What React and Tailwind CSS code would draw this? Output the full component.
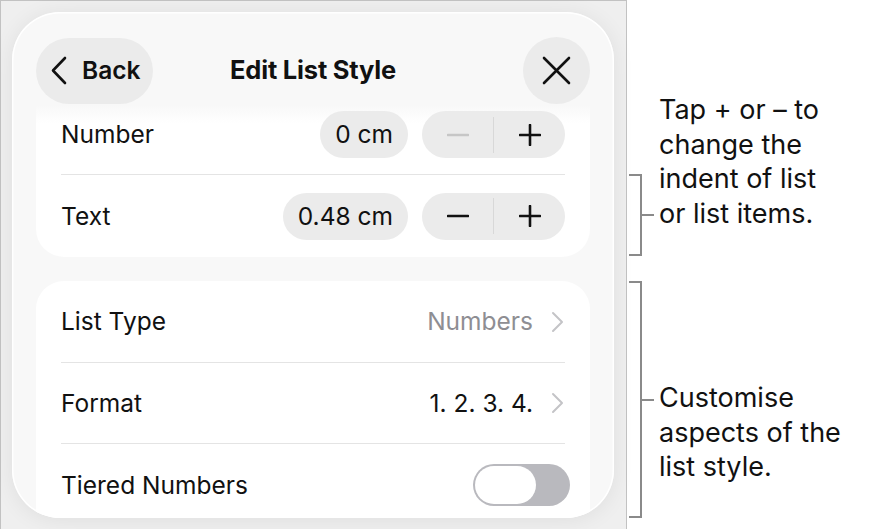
import React from "react";

function Chevron({ className }) {
  return (
    <svg width="13" height="22" viewBox="0 0 13 22" fill="none" className={className}>
      <path d="M2 2l9 9-9 9" stroke="currentColor" strokeWidth="2" strokeLinecap="round" strokeLinejoin="round" />
    </svg>
  );
}

function Stepper({ minusDisabled }) {
  return (
    <div className="flex items-center h-[47px] w-[143px] rounded-full bg-[#ebebeb]">
      <div className="flex-1 flex items-center justify-center">
        <svg width="22" height="4" viewBox="0 0 22 4">
          <path d="M1 2h20" stroke={minusDisabled ? "#c6c6c6" : "#111"} strokeWidth="2.6" strokeLinecap="round" />
        </svg>
      </div>
      <div className="w-px h-[36px] bg-[#d8d8d8]" />
      <div className="flex-1 flex items-center justify-center">
        <svg width="22" height="22" viewBox="0 0 22 22">
          <path d="M1 11h20M11 1v20" stroke="#111" strokeWidth="2.6" strokeLinecap="round" />
        </svg>
      </div>
    </div>
  );
}

function IndentRow({ label, value, minusDisabled, className }) {
  return (
    <div className={"flex items-center justify-between " + className}>
      <span>{label}</span>
      <div className="flex items-center gap-[14px]">
        <div className="h-[47px] px-[15px] rounded-full bg-[#ebebeb] flex items-center">{value}</div>
        <Stepper minusDisabled={minusDisabled} />
      </div>
    </div>
  );
}

function Bracket({ height }) {
  return (
    <div className="flex items-center">
      <div className="w-[13px] border-y-2 border-r-2 border-[#8a8a8a]" style={{ height }} />
      <div className="w-[12px] h-[2px] bg-[#8a8a8a]" />
    </div>
  );
}

export default function App() {
  return (
    <div
      className="flex w-[870px] h-[529px] bg-white text-[#111] overflow-hidden"
      style={{ fontFamily: "Inter, 'Noto Sans', sans-serif" }}
    >
      {/* device screenshot */}
      <div className="w-[627px] h-[529px] shrink-0 border-l border-t border-r border-[#c2c2c2] bg-[#efefef] pt-[11px] pl-[11px]">
        <div className="w-[602px] h-[506px] rounded-[48px] overflow-hidden bg-[#f8f8f8] px-[24px] shadow-[inset_0_0_0_1.5px_#ffffff,0_2px_22px_rgba(0,0,0,0.07)]">
          {/* header */}
          <div className="grid grid-cols-[1fr_auto_1fr] items-center h-[66px] mt-[25px]">
            <div className="flex">
              <div className="h-[66px] w-[117px] rounded-full bg-[#ebebeb] flex items-center pl-[14px] gap-[14px]">
                <svg width="18" height="29" viewBox="0 0 18 29" fill="none">
                  <path d="M15 2L3 14.5 15 27" stroke="#111" strokeWidth="2.6" strokeLinecap="round" strokeLinejoin="round" />
                </svg>
                <span className="text-[24.5px] font-semibold">Back</span>
              </div>
            </div>
            <div className="text-[25.5px] font-bold tracking-[-0.2px]">Edit List Style</div>
            <div className="flex justify-end">
              <div className="h-[67px] w-[67px] rounded-full bg-[#ebebeb] flex items-center justify-center">
                <svg width="29" height="29" viewBox="0 0 29 29" fill="none">
                  <path d="M2 2l25 25M27 2L2 27" stroke="#111" strokeWidth="2.6" strokeLinecap="round" />
                </svg>
              </div>
            </div>
          </div>

          {/* indents card */}
          <div className="mt-[2px] rounded-b-[28px] bg-[linear-gradient(to_bottom,#f8f8f8,#ffffff_18px)] px-[25px] text-[24.5px]">
            <IndentRow label="Number" value="0 cm" minusDisabled className="pt-[6px] pb-[16px]" />
            <div className="h-px bg-[#e4e4e4]" />
            <IndentRow label="Text" value="0.48 cm" className="h-[82px]" />
          </div>

          {/* list options card */}
          <div className="mt-[24px] rounded-t-[28px] bg-white px-[25px] text-[24.5px]">
            <div className="h-[81px] flex items-center justify-between">
              <span>List Type</span>
              <div className="flex items-center gap-[18px] text-[#8e8e93]">
                <span>Numbers</span>
                <Chevron className="text-[#c4c4c7] mr-[1px]" />
              </div>
            </div>
            <div className="h-px bg-[#e4e4e4]" />
            <div className="h-[80px] flex items-center justify-between">
              <span>Format</span>
              <div className="flex items-center gap-[18px]">
                <span>1. 2. 3. 4.</span>
                <Chevron className="text-[#c4c4c7] mr-[1px]" />
              </div>
            </div>
            <div className="h-px bg-[#e4e4e4]" />
            <div className="h-[82px] flex items-center justify-between">
              <span>Tiered Numbers</span>
              <div className="w-[97px] h-[42px] rounded-full bg-[#b9b9be] p-[2px] mr-[-5px]">
                <div className="w-[61px] h-[38px] rounded-full bg-white" />
              </div>
            </div>
          </div>
        </div>
      </div>

      {/* annotations */}
      <div className="flex-1 flex flex-col pl-[2px] text-[27px] leading-[34.5px] text-[#111]">
        <div className="flex items-start mt-[93px]">
          <div className="mt-[81px]">
            <Bracket height={82} />
          </div>
          <div className="ml-[5px]">
            Tap + or – to
            <br />
            change the
            <br />
            indent of list
            <br />
            or list items.
          </div>
        </div>
        <div className="flex items-start mt-[25px]">
          <Bracket height={237} />
          <div className="ml-[5px] mt-[100px]">
            Customise
            <br />
            aspects of the
            <br />
            list style.
          </div>
        </div>
      </div>
    </div>
  );
}
